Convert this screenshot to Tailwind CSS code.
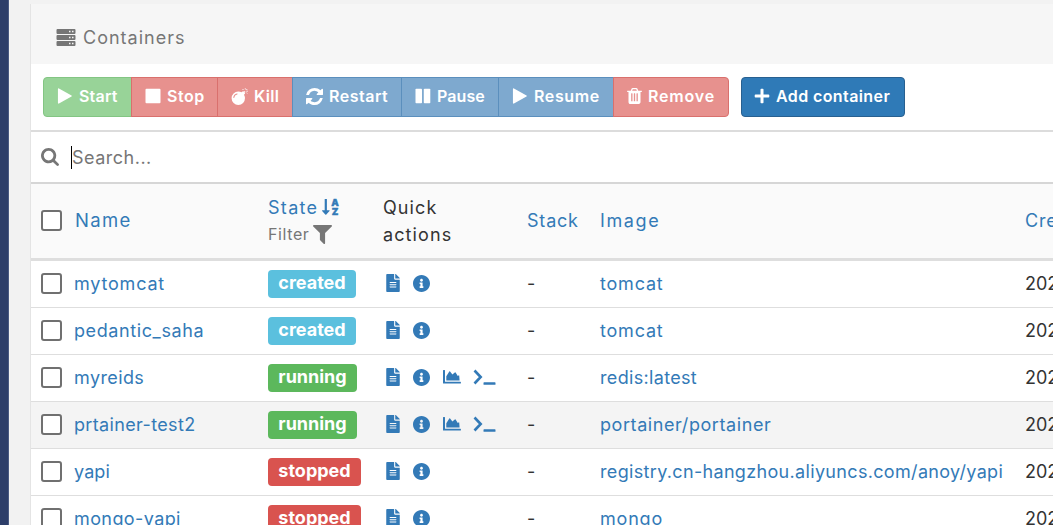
<!DOCTYPE html>
<html lang="en">
<head>
    <meta charset="UTF-8" />
    <meta name="viewport" content="width=device-width, initial-scale=1.0" />
    <title>Containers</title>
    <script src="https://cdn.jsdelivr.net/npm/@tailwindcss/browser@4"></script>
</head>
<body class="h-[525px] overflow-hidden bg-[#f2f2f2] font-[Inter,sans-serif] text-[18px] text-[#333]">
<!-- icons -->
<svg class="hidden">
    <symbol id="server" viewBox="0 0 20 17"><path d="M1.5 0h17q1 0 1 1v3q0 1-1 1h-17q-1 0-1-1v-3q0-1 1-1zM1.5 6h17q1 0 1 1v3q0 1-1 1h-17q-1 0-1-1v-3q0-1 1-1zM1.500 12h17q1 0 1 1v3q0 1-1 1h-17q-1 0-1-1v-3q0-1 1-1z" /><path fill="#f6f6f6" d="M13 1.700h1.500v1.500h-1.500zM16 1.700h1.500v1.500h-1.500zM13 7.700h1.500v1.500h-1.500zM16 7.700h1.500v1.500h-1.500zM13 13.700h1.500v1.500h-1.500zM16 13.700h1.500v1.500h-1.500z" /></symbol>
    <symbol id="play" viewBox="0 0 16 17"><path d="M.5 1.200q0-1.200 1.100-.7l13.300 7.400q1 .6 0 1.200l-13.300 7.400q-1.100.5-1.100-.7z" /></symbol>
    <symbol id="stop" viewBox="0 0 16 16"><rect x=".5" y=".8" width="15" height="14.500" rx="1" /></symbol>
    <symbol id="pause" viewBox="0 0 16 16"><rect x=".5" y=".8" width="6.500" height="14.500" rx=".8" /><rect x="8.800" y=".8" width="6.500" height="14.500" rx=".8" /></symbol>
    <symbol id="bomb" viewBox="0 0 17 17"><path d="M7.300 3.500q1.800 0 3.300.8l.9-.9q.6-.5 1.200 0l1.200 1.200q.5.600 0 1.200l-.9.900q1 1.600 1 3.400a6.700 6.700 0 1 1-6.700-6.600zM3.300 9.500q.3-2.500 2.800-3 .6-.2.500-.7-.1-.5-.7-.4-3.200.6-3.600 3.900 0 .6.500.7.500 0 .5-.5z" fill-rule="evenodd" /><path d="M13.200 4l1-1M15.200 4.500l1 1M12.500 2l-1-1M14.300 1.500V.3M15.400 3.200h1.400M15.300 2l1-1" stroke="currentColor" stroke-width=".9" /></symbol>
    <symbol id="refresh" viewBox="128 128 1536 1536"><path d="M1639 1056q0 5-1 7-64 268-268 434.500t-478 166.500q-146 0-282.500-55t-243.500-157l-129 129q-19 19-45 19t-45-19-19-45v-448q0-26 19-45t45-19h448q26 0 45 19t19 45-19 45l-137 137q71 66 161 102t187 36q134 0 250-65t186-179q11-17 53-117 8-23 30-23h192q13 0 22.500 9.500t9.500 22.500zm25-800v448q0 26-19 45t-45 19h-448q-26 0-45-19t-19-45 19-45l138-138q-148-137-349-137-134 0-250 65t-186 179q-11 17-53 117-8 23-30 23h-199q-13 0-22.500-9.500t-9.500-22.500v-7q65-268 270-434.500t480-166.500q146 0 284 55.500t245 156.500l130-129q19-19 45-19t45 19 19 45z" /></symbol>
    <symbol id="trash" viewBox="192 128 1408 1536"><path d="M704 1376v-704q0-14-9-23t-23-9h-64q-14 0-23 9t-9 23v704q0 14 9 23t23 9h64q14 0 23-9t9-23zm256 0v-704q0-14-9-23t-23-9h-64q-14 0-23 9t-9 23v704q0 14 9 23t23 9h64q14 0 23-9t9-23zm256 0v-704q0-14-9-23t-23-9h-64q-14 0-23 9t-9 23v704q0 14 9 23t23 9h64q14 0 23-9t9-23zm-544-992h448l-48-117q-7-9-17-11h-317q-10 2-17 11zm928 32v64q0 14-9 23t-23 9h-96v948q0 83-47 143.500t-113 60.500h-832q-66 0-113-58.500t-47-141.500v-952h-96q-14 0-23-9t-9-23v-64q0-14 9-23t23-9h309l70-167q15-37 54-63t79-26h320q40 0 79 26t54 63l70 167h309q14 0 23 9t9 23z" /></symbol>
    <symbol id="plus" viewBox="0 0 16 16"><path d="M6.500 1.500q0-.8.800-.8h1.400q.8 0 .8.800v5h5q.8 0 .8.800v1.400q0 .8-.8.800h-5v5q0 .8-.8.800h-1.400q-.8 0-.8-.8v-5h-5q-.8 0-.8-.8v-1.400q0-.8.800-.8h5z" /></symbol>
    <symbol id="search" viewBox="64 128 1664 1664"><path d="M1216 832q0-185-131.500-316.500t-316.500-131.500-316.500 131.500-131.500 316.500 131.500 316.500 316.500 131.500 316.500-131.500 131.500-316.500zm512 832q0 52-38 90t-90 38q-54 0-90-38l-343-342q-179 124-399 124-143 0-273.500-55.500t-225-150-150-225-55.500-273.500 55.500-273.500 150-225 225-150 273.500-55.500 273.500 55.500 225 150 150 225 55.500 273.500q0 220-124 399l343 343q37 37 37 90z" /></symbol>
    <symbol id="sort" viewBox="0 0 18 18"><path d="M2.700 1h2.200v11.300h2.300q.8 0 .3.700l-3.200 3.600q-.5.500-1 0L.1 13q-.5-.7.300-.7h2.300z" /><text x="9.300" y="8" font-size="9.500" font-weight="900" stroke="currentColor" stroke-width=".4">A</text><text x="9.700" y="17" font-size="9.500" font-weight="900" stroke="currentColor" stroke-width=".4">Z</text></symbol>
    <symbol id="filter" viewBox="192 256 1408 1408"><path d="M1595 295q17 41-14 70l-493 493v742q0 42-39 59-13 5-25 5-27 0-45-19l-256-256q-19-19-19-45v-486l-493-493q-31-29-14-70 17-39 59-39h1280q42 0 59 39z" /></symbol>
    <symbol id="file" viewBox="0 0 384 512"><path d="M224 136V0H24C10.700 0 0 10.700 0 24v464c0 13.300 10.700 24 24 24h336c13.300 0 24-10.700 24-24V160H248c-13.200 0-24-10.800-24-24zm64 236c0 6.600-5.400 12-12 12H108c-6.600 0-12-5.400-12-12v-8c0-6.600 5.400-12 12-12h168c6.600 0 12 5.400 12 12v8zm0-64c0 6.600-5.400 12-12 12H108c-6.600 0-12-5.400-12-12v-8c0-6.600 5.400-12 12-12h168c6.600 0 12 5.400 12 12v8zm0-72v8c0 6.600-5.400 12-12 12H108c-6.600 0-12-5.400-12-12v-8c0-6.600 5.400-12 12-12h168c6.600 0 12 5.400 12 12zm96-114.100v6.100H256V0h6.100c6.400 0 12.500 2.500 17 7l97.900 98c4.500 4.500 7 10.600 7 16.900z" /></symbol>
    <symbol id="info" viewBox="8 8 496 496"><path d="M256 8C119.043 8 8 119.083 8 256c0 136.997 111.043 248 248 248s248-111.003 248-248C504 119.083 392.957 8 256 8zm0 110c23.196 0 42 18.804 42 42s-18.804 42-42 42-42-18.804-42-42 18.804-42 42-42zm56 254c0 6.627-5.373 12-12 12h-88c-6.627 0-12-5.373-12-12v-24c0-6.627 5.373-12 12-12h12v-64h-12c-6.627 0-12-5.373-12-12v-24c0-6.627 5.373-12 12-12h64c6.627 0 12 5.373 12 12v100h12c6.627 0 12 5.373 12 12v24z" /></symbol>
    <symbol id="chart" viewBox="0 0 18 14"><path d="M.5 0h1q.5 0 .5.500v11.200h15.400q.5 0 .5.500v.9q0 .5-.5.500H.5q-.5 0-.5-.5V.5Q0 0 .5 0zM3.300 10.500V6.200l3-4.700q.4-.5.800 0l2.300 3 2.400-2q.5-.4.800.1l2.200 3.400.8-.6q.4-.2.600.200l.4 4.900z" /></symbol>
    <symbol id="terminal" viewBox="0 0 23 17"><path d="M1.500 1.500L7.700 8 1.500 14.500" fill="none" stroke="currentColor" stroke-width="2.600" /><rect x="10.500" y="13.300" width="12" height="2.500" rx=".6" /></symbol>
</svg>

<div class="flex h-full">
    <div class="w-[9px] shrink-0 border-r border-[#4a5a82] bg-[#2d3e69]"></div>

    <div class="mt-[4px] ml-[21px] flex-1 border-l border-[#e4e4e4] bg-white">
        <div class="flex h-[60px] items-center gap-[7px] bg-[#f6f6f6] pt-[6px] pl-[25px] text-[#767676]">
            <svg class="h-[17px] w-5 fill-current"><use href="#server" /></svg>
            <span class="tracking-[1px]">Containers</span>
        </div>

        <!-- toolbar -->
        <div class="flex h-[68px] items-start border-b-2 border-[#dcdcdc] pt-[13px] pl-[12px] text-[16px] font-semibold text-white">
            <div id="actions" class="flex"></div>
            <button class="ml-[13px] flex h-10 w-[164px] items-center gap-[6px] rounded-[4px] border border-[#286090] bg-[#2f7ab7] pb-[2px] pl-[12px]">
                <svg class="size-4 fill-current"><use href="#plus" /></svg>
                <span class="tracking-[0.4px]">Add container</span>
            </button>
        </div>

        <div class="flex h-[52px] items-center border-b-2 border-[#d6d6d6] pl-[10px] text-[#767676]">
            <svg class="size-[18px] fill-current"><use href="#search" /></svg>
            <span class="ml-[12px] h-[23px] w-px bg-black"></span>
            <span class="tracking-[0.5px]">Search...</span>
        </div>

        <!-- table -->
        <div class="grid h-[77px] grid-cols-[43px_194px_115px_144px_73px_425px_60px] items-center border-b-3 border-[#dedede] bg-[#fafafa] pb-px text-[#337ab7]">
            <span class="ml-[10px] size-[21px] rounded-[3px] border-2 border-[#707070] bg-white"></span>
            <span class="pl-px text-[18.5px] tracking-[1.3px]">Name</span>
            <div class="leading-[27px]">
                <div class="flex items-center gap-[4px]"><span class="tracking-[1.3px]">State</span><svg class="size-[18px] fill-current"><use href="#sort" /></svg></div>
                <div class="flex items-center gap-[4px] text-[16px] text-[#767676]"><span class="tracking-[0.6px]">Filter</span><svg class="size-[19px] fill-current"><use href="#filter" /></svg></div>
            </div>
            <span class="leading-[27px] tracking-[1.1px] text-[#333]">Quick<br />actions</span>
            <span class="tracking-[0.8px]">Stack</span>
            <span class="tracking-[1.6px]">Image</span>
            <span class="tracking-[0.8px]">Created</span>
        </div>
        <div id="rows"></div>
    </div>
</div>

<script>
    const green = "border-[#83c583] bg-[#98d398]";
    const red = "border-[#d9706d] bg-[#e7918e]";
    const blue = "border-[#5b8fbd] bg-[#7ea9cf]";
    const actions = [
        { text: "Start", icon: "play", size: "size-4", cls: `w-[89px] rounded-l-[4px] tracking-[0.2px] ${green}` },
        { text: "Stop", icon: "stop", size: "size-4", cls: `w-[87px] tracking-[0.5px] ${red}` },
        { text: "Kill", icon: "bomb", size: "size-[17px]", cls: `w-[76px] tracking-[0.3px] ${red}` },
        { text: "Restart", icon: "refresh", size: "size-[17px]", cls: `w-[110px] tracking-[0.5px] ${blue}` },
        { text: "Pause", icon: "pause", size: "size-4", cls: `w-[98px] tracking-[0.1px] ${blue}` },
        { text: "Resume", icon: "play", size: "size-4", cls: `w-[116px] tracking-[0.6px] ${blue}` },
        { text: "Remove", icon: "trash", size: "h-4 w-[15px]", cls: `w-[116px] rounded-r-[4px] tracking-[0.8px] ${red}` }
    ];
    document.getElementById("actions").innerHTML = actions.map(a => `
        <button class="-mr-px flex h-10 items-center gap-[6px] border pb-[2px] pl-[13px] ${a.cls}">
            <svg class="${a.size} fill-current"><use href="#${a.icon}" /></svg>
            <span>${a.text}</span>
        </button>`).join("");

    const states = {
        created: "w-[88px] bg-[#5bc0de]",
        running: "w-[89px] bg-[#5cb85c]",
        stopped: "w-[93px] bg-[#d9534f]"
    };
    const rows = [
        { name: "mytomcat", nameCls: "tracking-[0.8px]", state: "created", image: "tomcat", imageCls: "tracking-[0.8px]" },
        { name: "pedantic_saha", nameCls: "tracking-[0.6px]", state: "created", image: "tomcat", imageCls: "tracking-[0.8px]" },
        { name: "myreids", nameCls: "tracking-[0.4px]", state: "running", image: "redis:latest", imageCls: "tracking-[0.33px]" },
        { name: "prtainer-test2", nameCls: "tracking-[0.35px]", state: "running", image: "portainer/portainer", imageCls: "tracking-[0.58px]", active: true },
        { name: "yapi", nameCls: "tracking-[0.1px]", state: "stopped", image: "registry.cn-hangzhou.aliyuncs.com/anoy/yapi", imageCls: "tracking-[0.33px]" },
        { name: "mongo-yapi", nameCls: "tracking-[0.4px]", state: "stopped", image: "mongo", imageCls: "tracking-[0.8px]" }
    ];
    document.getElementById("rows").innerHTML = rows.map(r => `
        <div class="grid h-[47px] grid-cols-[43px_194px_115px_144px_73px_425px_60px] items-center border-b border-[#dedede] pb-[2px] whitespace-nowrap text-[#337ab7] ${r.active ? "bg-[#f4f4f4]" : ""}">
            <span class="ml-[10px] size-[21px] rounded-[3px] border-2 border-[#707070] bg-white"></span>
            <span class="${r.nameCls}">${r.name}</span>
            <span class="mt-px flex h-7 items-center justify-center rounded-[4px] pb-[2px] font-bold text-white ${states[r.state]}">${r.state}</span>
            <div class="flex items-center pl-[3px]">
                <svg class="h-[18px] w-[14px] fill-current"><use href="#file" /></svg>
                <svg class="ml-[13px] size-[17px] fill-current"><use href="#info" /></svg>
                ${r.state === "running" ? `
                <svg class="ml-[13px] h-[14px] w-[18px] fill-current"><use href="#chart" /></svg>
                <svg class="ml-[12px] h-[17px] w-[23px] fill-current"><use href="#terminal" /></svg>` : ""}
            </div>
            <span class="text-[#333]">-</span>
            <span class="${r.imageCls}">${r.image}</span>
            <span class="text-[#333]">2020</span>
        </div>`).join("");
</script>
</body>
</html>
